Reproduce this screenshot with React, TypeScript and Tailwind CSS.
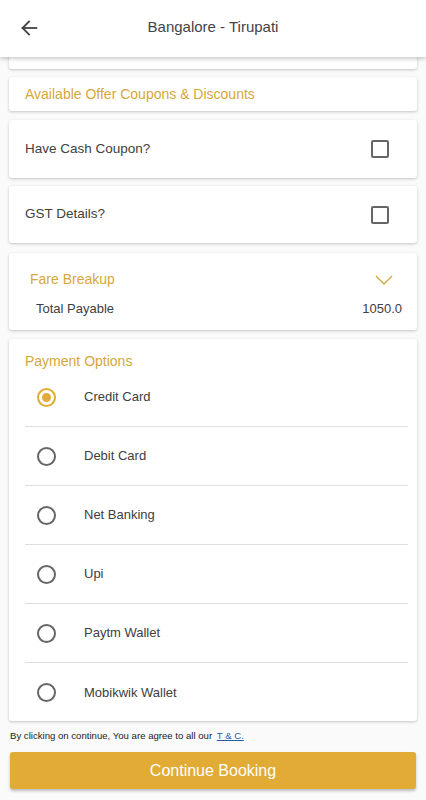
const options = ['Credit Card', 'Debit Card', 'Net Banking', 'Upi', 'Paytm Wallet', 'Mobikwik Wallet'];

function Card({ children, className = '' }: { children: React.ReactNode; className?: string }) {
  return (
    <div className={`mx-[9px] bg-white rounded-[3px] shadow-[0_1px_3px_rgba(0,0,0,0.22)] ${className}`}>
      {children}
    </div>
  );
}

function Checkbox() {
  return <div className="w-[18px] h-[18px] border-2 border-[#666] rounded-[2px]" />;
}

export default function App() {
  return (
    <div className="w-[426px] h-[800px] bg-[#fafafa] overflow-hidden font-[family-name:'Liberation_Sans',Arial,sans-serif] text-[#404040]">
      <header className="relative z-10 h-[57px] bg-white flex items-center shadow-[0_2px_4px_rgba(0,0,0,0.2)]">
        <button className="absolute left-[18px] top-[17px] p-0">
          <svg width="22" height="22" viewBox="0 0 24 24" fill="none" stroke="#444" strokeWidth="2" strokeLinecap="square">
            <path d="M20 12H5" />
            <path d="M12 5l-7 7 7 7" />
          </svg>
        </button>
        <h1 className="w-full text-center text-[15px] text-[#444] -mt-[3px]">Bangalore - Tirupati</h1>
      </header>

      <div className="-mt-[4px] mx-[9px] h-[16px] bg-white rounded-b-[3px] shadow-[0_1px_3px_rgba(0,0,0,0.22)]" />

      <Card className="mt-[8px] h-[34px] flex items-center px-[16px]">
        <span className="text-[14px] text-[#d6a73a]">Available Offer Coupons &amp; Discounts</span>
      </Card>

      <Card className="mt-[9px] h-[58px] flex items-center justify-between pl-[16px] pr-[28px]">
        <span className="text-[13.5px]">Have Cash Coupon?</span>
        <Checkbox />
      </Card>

      <Card className="mt-[8px] h-[57px] flex items-center justify-between pl-[16px] pr-[28px]">
        <span className="text-[13.5px]">GST Details?</span>
        <Checkbox />
      </Card>

      <Card className="mt-[10px] h-[77px] pt-[16px] pl-[21px] pr-[15px]">
        <div className="flex items-center justify-between">
          <span className="text-[14px] text-[#d6a73a]">Fare Breakup</span>
          <svg width="18" height="10" viewBox="0 0 18 10" fill="none" stroke="#d6a73a" strokeWidth="1.3" className="mr-[9px]">
            <path d="M1 1l8 8 8-8" />
          </svg>
        </div>
        <div className="flex items-center justify-between mt-[9px] pl-[6px]">
          <span className="text-[13px]">Total Payable</span>
          <span className="text-[13px]">1050.0</span>
        </div>
      </Card>

      <Card className="mt-[9px] h-[382px] pt-[15px]">
        <div className="px-[16px] text-[14px] leading-[14px] text-[#d6a73a]">Payment Options</div>
        <div className="ml-[16px] mr-[9px]">
          {options.map((o, i) => (
            <div
              key={o}
              className={`h-[59px] flex items-center ${i < options.length - 1 ? 'border-b border-[#ddd]' : ''}`}
            >
              <div
                className={`ml-[12px] w-[19px] h-[19px] rounded-full border-2 flex items-center justify-center ${
                  i === 0 ? 'border-[#e0ab36]' : 'border-[#666]'
                }`}
              >
                {i === 0 && <div className="w-[9px] h-[9px] rounded-full bg-[#e0ab36]" />}
              </div>
              <span className="ml-[28px] text-[13px]">{o}</span>
            </div>
          ))}
        </div>
      </Card>

      <p className="mt-[8px] px-[10px] text-[9.6px] text-[#222]">
        By clicking on continue, You are agree to all our{' '}
        <span className="ml-[2px] text-[#1f5fa8] underline">T &amp; C.</span>
      </p>

      <button className="mt-[9px] mx-[10px] w-[406px] h-[37px] bg-[#e1ab35] rounded-[3px] text-white text-[16px] shadow-[0_2px_3px_rgba(0,0,0,0.25)]">
        Continue Booking
      </button>
    </div>
  );
}
